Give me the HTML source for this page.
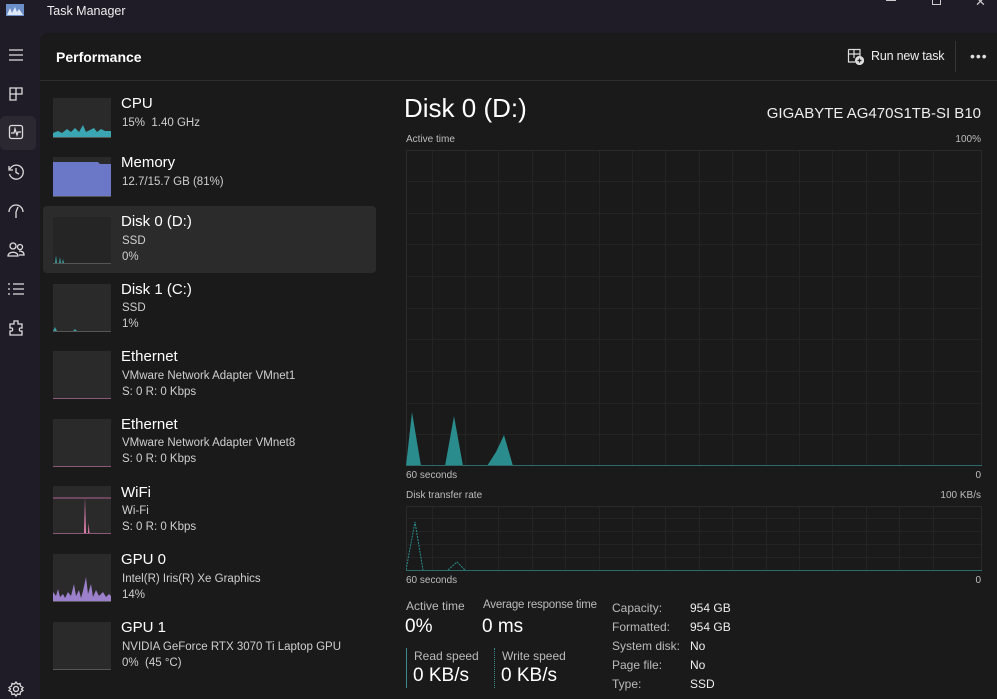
<!DOCTYPE html>
<html><head><meta charset="utf-8"><style>
*{margin:0;padding:0;box-sizing:border-box}
body{width:997px;height:699px;background:#201c27;font-family:"Segoe UI","Liberation Sans",sans-serif;color:#fff;position:relative;overflow:hidden}
.a{position:absolute}
.main{left:40px;top:33px;width:957px;height:666px;background:#1a1a1a;border-top-left-radius:8px}
.t{font-size:15px;color:#fff;white-space:nowrap}
.s{font-size:11.5px;color:#cfcfcf;white-space:nowrap;line-height:16px}
.th{left:53px;width:58px;background:#2a2a2a;border-bottom:1px solid #555}
.sm{font-size:10px;color:#bdbdbd;white-space:nowrap}
</style></head><body>
<svg class="a" style="left:6px;top:4px" width="18" height="12"><rect width="18" height="12" fill="#6d8fc8"/><path d="M1 11 L4 4 L6 9 L9 3 L11 8 L13 5 L17 11Z" fill="#dfe8f8"/></svg>
<div class="a" style="left:47px;top:4px;font-size:12.5px;color:#eee">Task Manager</div>
<div class="a" style="left:886px;top:0;width:10px;height:1px;background:#ccc"></div>
<div class="a" style="left:932px;top:-4px;width:9px;height:9px;border:1px solid #ccc"></div>
<div class="a" style="left:975px;top:-6px;font-size:13px;color:#ccc">✕</div>
<svg class="a" style="left:7px;top:47px" width="18" height="16" stroke="#ddd" stroke-width="1.3"><path d="M2 3H16M2 8H16M2 13H16"/></svg>
<svg class="a" style="left:8px;top:86px" width="16" height="16" fill="none" stroke="#ddd" stroke-width="1.3"><path d="M2 2H8V8H2ZM8 2H14V8H8M2 8V14H8V8"/></svg>
<div class="a" style="left:0;top:116px;width:36px;height:34px;background:#2c2832;border-radius:5px"></div>
<svg class="a" style="left:8px;top:124px" width="16" height="16" fill="none" stroke="#ddd" stroke-width="1.3"><rect x="1.5" y="1.5" width="13" height="13" rx="2"/><path d="M3 9H6L7 5L9 11L10 8H13"/></svg>
<svg class="a" style="left:7px;top:163px" width="18" height="18" fill="none" stroke="#ddd" stroke-width="1.3"><path d="M3 6A7 7 0 1 1 2.5 11M2 3V7H6M9 5V9.5L12 11"/></svg>
<svg class="a" style="left:7px;top:203px" width="18" height="16" fill="none" stroke="#ddd" stroke-width="1.3"><path d="M2 9A7 7 0 0 1 16 9M9 9L11 4M9 9V15"/></svg>
<svg class="a" style="left:7px;top:241px" width="18" height="18" fill="none" stroke="#ddd" stroke-width="1.3"><circle cx="6" cy="5" r="3"/><circle cx="13" cy="6" r="2.5"/><path d="M1 15C1 10 11 10 11 15ZM12 10C16 10 17 12 17 14H12"/></svg>
<svg class="a" style="left:7px;top:282px" width="18" height="14" stroke="#ddd" stroke-width="1.3"><path d="M1 2H3M1 7H3M1 12H3M6 2H17M6 7H17M6 12H17"/></svg>
<svg class="a" style="left:7px;top:319px" width="18" height="18" fill="none" stroke="#ddd" stroke-width="1.3"><path d="M7 2H11V5H15V9H13A2 2 0 0 0 13 12H15V16H3V12H5A2 2 0 0 0 5 9H3V5H7Z"/></svg>
<svg class="a" style="left:8px;top:681px" width="16" height="16" fill="none" stroke="#ddd" stroke-width="1.3"><circle cx="8" cy="8" r="2.5"/><path d="M8 1L9.5 3L12 2.5L12.5 5L15 6.5L13.5 8L15 9.5L12.5 11L12 13.5L9.5 13L8 15L6.5 13L4 13.5L3.5 11L1 9.5L2.5 8L1 6.5L3.5 5L4 2.5L6.5 3Z"/></svg>

<div class="a main"></div>
<div class="a" style="left:56px;top:49px;font-size:14px;font-weight:600">Performance</div>
<svg class="a" style="left:847px;top:48px" width="17" height="17" fill="none" stroke="#ddd" stroke-width="1.2"><path d="M1.5 1.5H13V8M1.5 1.5V14H8M1.5 6H13M7 1.5V10"/><circle cx="12.5" cy="12.5" r="4" fill="#ddd"/><path d="M12.5 10.5V14.5M10.5 12.5H14.5" stroke="#222"/></svg>
<div class="a" style="left:871px;top:49px;font-size:12.5px;color:#eee;letter-spacing:-0.2px">Run new task</div>
<div class="a" style="left:955px;top:41px;width:1px;height:31px;background:#333"></div>
<div class="a" style="left:970px;top:48px;font-size:14px;color:#ddd;letter-spacing:1px">•••</div>
<div class="a" style="left:40px;top:80px;width:957px;height:1px;background:#2e2e2e"></div>

<div class="a" style="left:43px;top:206px;width:333px;height:67px;background:#2b2b2b;border-radius:4px"></div>
<svg class="a th" style="top:98px;height:40px" width="58" height="40"><path d="M0 40L0 35L5 33L9 35L14 31L18 34L22 30L26 34L30 27L33 34L37 32L41 30L44 34L48 31L52 33L58 33L58 40Z" fill="#3aa6b3"/></svg>
<svg class="a th" style="top:157px;height:40px" width="58" height="40"><path d="M0 40V5H45L47 7H58V40Z" fill="#6b78c8"/></svg>
<svg class="a th" style="top:217px;height:47px;background:#252525" width="58" height="47"><path d="M2 46L3 38L4 46ZM6 46L7 40L8 46ZM9 46L10 42L11 46Z" fill="#3a9e9e"/></svg>
<svg class="a th" style="top:284px;height:48px" width="58" height="48"><path d="M0 47L2 43L4 47M20 47L22 45L24 47" fill="#3a9e9e"/></svg>
<div class="a th" style="top:351px;height:48px;border-bottom-color:#8a5a78"></div>
<div class="a th" style="top:419px;height:48px;border-bottom-color:#8a5a78"></div>
<svg class="a th" style="top:486px;height:48px;border-bottom-color:#8a5a78" width="58" height="48"><path d="M0 12H58" stroke="#b0608e"/><path d="M31 47L32 11L33 47ZM35 47L35.5 37L36.5 47Z" fill="#e080b0"/></svg>
<svg class="a th" style="top:554px;height:48px" width="58" height="48"><path d="M0 48V38L3 42L5 35L7 43L10 40L12 44L15 38L18 42L21 30L23 42L26 36L28 44L30 37L33 23L35 40L38 30L40 43L43 36L46 42L50 38L53 43L56 40L58 42V48Z" fill="#9d80cc"/></svg>
<div class="a th" style="top:622px;height:48px"></div>

<div class="a t" style="left:121px;top:95px">CPU</div><div class="a s" style="left:122px;top:115px">15%&nbsp; 1.40 GHz</div>
<div class="a t" style="left:121px;top:154px">Memory</div><div class="a s" style="left:122px;top:174px">12.7/15.7 GB (81%)</div>
<div class="a t" style="left:121px;top:213px">Disk 0 (D:)</div><div class="a s" style="left:122px;top:233px">SSD<br>0%</div>
<div class="a t" style="left:121px;top:281px">Disk 1 (C:)</div><div class="a s" style="left:122px;top:300px">SSD<br>1%</div>
<div class="a t" style="left:121px;top:348px">Ethernet</div><div class="a s" style="left:122px;top:368px">VMware Network Adapter VMnet1<br>S: 0 R: 0 Kbps</div>
<div class="a t" style="left:121px;top:416px">Ethernet</div><div class="a s" style="left:122px;top:435px">VMware Network Adapter VMnet8<br>S: 0 R: 0 Kbps</div>
<div class="a t" style="left:121px;top:484px">WiFi</div><div class="a s" style="left:122px;top:503px">Wi-Fi<br>S: 0 R: 0 Kbps</div>
<div class="a t" style="left:121px;top:551px">GPU 0</div><div class="a s" style="left:122px;top:571px">Intel(R) Iris(R) Xe Graphics<br>14%</div>
<div class="a t" style="left:121px;top:619px">GPU 1</div><div class="a s" style="left:122px;top:639px">NVIDIA GeForce RTX 3070 Ti Laptop GPU<br>0%&nbsp; (45 °C)</div>

<div class="a" style="left:404px;top:93px;font-size:26px;color:#fff">Disk 0 (D:)</div>
<div class="a" style="right:16px;top:105px;font-size:15px;color:#eee">GIGABYTE AG470S1TB-SI B10</div>
<div class="a sm" style="left:406px;top:134px">Active time</div>
<div class="a sm" style="right:16px;top:134px">100%</div>
<svg class="a" style="left:406px;top:150px" width="576" height="317">
<g stroke="#242424" stroke-width="1">
<path d="M0 31.5H576M0 63.5H576M0 94.5H576M0 126.5H576M0 158.5H576M0 189.5H576M0 221.5H576M0 253.5H576M0 284.5H576"/>
<path d="M26.5 0V316M59.5 0V316M92.5 0V316M126.5 0V316M159.5 0V316M193.5 0V316M226.5 0V316M259.5 0V316M293.5 0V316M326.5 0V316M360.5 0V316M393.5 0V316M426.5 0V316M460.5 0V316M493.5 0V316M527.5 0V316"/>
</g>
<rect x="0.5" y="0.5" width="575" height="315" fill="none" stroke="#2a2a2a"/>
<path d="M0 316L6 262L15 316ZM39 316L48 266L57 316ZM81 316L90 302L98 285L107 316Z" fill="#2a8c8c"/>
<path d="M0 315.5H576" stroke="#2a6b6b"/>
</svg>
<div class="a sm" style="left:406px;top:470px">60 seconds</div>
<div class="a sm" style="right:16px;top:470px">0</div>
<div class="a sm" style="left:406px;top:490px">Disk transfer rate</div>
<div class="a sm" style="right:16px;top:490px">100 KB/s</div>
<svg class="a" style="left:406px;top:506px" width="576" height="65">
<g stroke="#242424"><path d="M0 12.5H576M0 25.5H576M0 38.5H576M0 51.5H576"/><path d="M26.5 0V64M59.5 0V64M92.5 0V64M126.5 0V64M159.5 0V64M193.5 0V64M226.5 0V64M259.5 0V64M293.5 0V64M326.5 0V64M360.5 0V64M393.5 0V64M426.5 0V64M460.5 0V64M493.5 0V64M527.5 0V64"/></g>
<rect x="0.5" y="0.5" width="575" height="64" fill="none" stroke="#2a2a2a"/>
<path d="M0 64L9 16L17 64M42 64L51 56L59 64" fill="none" stroke="#2a8c8c" stroke-dasharray="2 1"/>
<path d="M0 64.5H576" stroke="#2a6b6b"/>
</svg>
<div class="a sm" style="left:406px;top:575px">60 seconds</div>
<div class="a sm" style="right:16px;top:575px">0</div>

<div class="a" style="left:406px;top:599px;font-size:12px;color:#bbb">Active time</div>
<div class="a" style="left:405px;top:616px;font-size:19px">0%</div>
<div class="a" style="left:483px;top:599px;font-size:11.5px;color:#bbb;letter-spacing:-0.2px">Average response time</div>
<div class="a" style="left:482px;top:616px;font-size:19px">0 ms</div>
<div class="a" style="left:406px;top:648px;width:1px;height:40px;background:#3a8a8a"></div>
<div class="a" style="left:414px;top:649px;font-size:12px;color:#bbb">Read speed</div>
<div class="a" style="left:413px;top:665px;font-size:19px">0 KB/s</div>
<div class="a" style="left:494px;top:648px;width:0;height:40px;border-left:1px dotted #3a8a8a"></div>
<div class="a" style="left:502px;top:649px;font-size:12px;color:#bbb">Write speed</div>
<div class="a" style="left:501px;top:665px;font-size:19px">0 KB/s</div>
<div class="a" style="left:612px;top:599px;font-size:12px;color:#bbb;line-height:19px">Capacity:<br>Formatted:<br>System disk:<br>Page file:<br>Type:</div>
<div class="a" style="left:690px;top:599px;font-size:12px;color:#eee;line-height:19px">954 GB<br>954 GB<br>No<br>No<br>SSD</div>
</body></html>
